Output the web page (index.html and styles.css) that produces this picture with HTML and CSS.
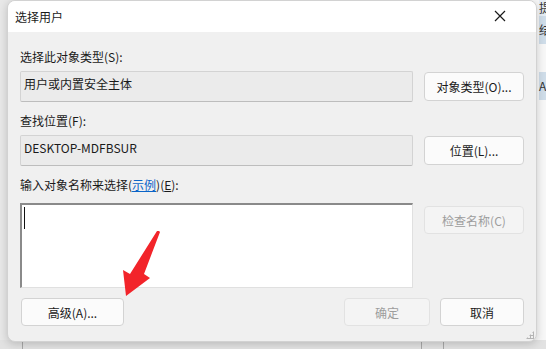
FILE: index.html
```html
<!DOCTYPE html>
<html lang="zh-CN">
<head>
    <meta charset="UTF-8">
    <meta name="viewport" content="width=device-width, initial-scale=1.0">
    <title>选择用户</title>
    <link rel="stylesheet" href="styles.css">
</head>
<body>
    <div class="desktop">
        <div class="backapp">
            <div class="back-head">提</div>
            <div class="back-row blue">结</div>
            <div class="back-row"></div>
            <div class="back-row blue">A</div>
        </div>
        <div class="back-bottom">
            <span class="vline l1"></span>
            <span class="vline l2"></span>
            <span class="vline l3"></span>
        </div>

        <div class="dialog">
            <div class="titlebar">
                <span class="title">选择用户</span>
                <svg class="close" width="12" height="12" viewBox="0 0 12 12">
                    <path d="M1 1 L11 11 M11 1 L1 11" stroke="#1a1a1a" stroke-width="1.2" fill="none"/>
                </svg>
            </div>

            <div class="body">
                <div class="label">选择此对象类型(S):</div>
                <div class="row">
                    <div class="field">用户或内置安全主体</div>
                    <button class="btn">对象类型(O)...</button>
                </div>

                <div class="label">查找位置(F):</div>
                <div class="row">
                    <div class="field">DESKTOP-MDFBSUR</div>
                    <button class="btn">位置(L)...</button>
                </div>

                <div class="label names-label">输入对象名称来选择(<a class="link" href="#">示例</a>)(<u>E</u>):</div>
                <div class="row top">
                    <div class="names"><span class="caret"></span></div>
                    <button class="btn disabled">检查名称(C)</button>
                </div>

                <div class="footer">
                    <button class="btn advanced">高级(A)...</button>
                    <div class="spacer"></div>
                    <button class="btn disabled ok">确定</button>
                    <button class="btn cancel">取消</button>
                </div>
            </div>
            <div class="grip"></div>
        </div>

        <svg class="arrow" width="60" height="80" viewBox="0 0 60 80">
            <path d="M46 4 L47 5 L31 47 L37 51 L13 69 L10 43 L17 47 L44 4 Z" fill="#f2242a"/>
        </svg>
    </div>
</body>
</html>
```

FILE: styles.css
```css
* {
    box-sizing: border-box;
}

body {
    margin: 0;
    font-family: "Noto Sans CJK SC", "Noto Sans", sans-serif;
    font-size: 12px;
    color: #1a1a1a;
    background: #e7e7e7;
}

.desktop {
    position: relative;
    width: 546px;
    height: 349px;
    overflow: hidden;
    background: #e8e8e8;
}

.backapp {
    position: absolute;
    left: 530px;
    top: 0;
    width: 16px;
    height: 349px;
    background: #f7f7f7;
    font-size: 12px;
    line-height: 20px;
    padding-left: 9px;
    color: #333;
    overflow: hidden;
}

.back-head {
    height: 16px;
    line-height: 16px;
    background: #e6edf4;
}

.back-row {
    height: 28px;
    line-height: 28px;
}

.back-row.blue {
    background: #cfdde9;
}

.back-bottom {
    position: absolute;
    left: 0;
    top: 340px;
    width: 546px;
    height: 9px;
    background: #e2e2e2;
}

.vline {
    position: absolute;
    top: 0;
    width: 1px;
    height: 9px;
    background: #a8a8a8;
}

.l1 { left: 22px; }
.l2 { left: 421px; }
.l3 { left: 443px; }

.dialog {
    position: absolute;
    left: 7px;
    top: 0;
    width: 530px;
    height: 342px;
    background: #f0f0f0;
    border: 1px solid #d2d2d2;
    border-radius: 8px;
    box-shadow: 0 2px 8px rgba(0, 0, 0, 0.18);
    overflow: hidden;
}

.titlebar {
    height: 31px;
    background: #fff;
    display: flex;
    align-items: center;
    justify-content: space-between;
    padding: 0 30px 0 7px;
}

.title {
    font-size: 12px;
}

.close {
    display: block;
    margin-top: -1px;
}

.body {
    padding: 17px 12px 0 12px;
}

.label {
    height: 16px;
    line-height: 16px;
    margin-bottom: 6px;
}

.names-label {
    margin-bottom: 10px;
}

.link {
    color: #0a64c8;
    text-decoration: underline;
}

.row {
    display: flex;
    align-items: center;
    gap: 11px;
    margin-bottom: 11px;
}

.row.top {
    align-items: flex-start;
    margin-bottom: 10px;
}

.field {
    width: 393px;
    height: 31px;
    padding: 3px 0 0 3px;
    background: #ebebeb;
    border: 1px solid #d3d3d3;
    border-bottom-color: #bdbdbd;
    border-radius: 2px;
}

.btn {
    width: 100px;
    height: 29px;
    font-family: inherit;
    font-size: 12px;
    color: #1a1a1a;
    background: #fbfbfb;
    border: 1px solid #d3d3d3;
    border-radius: 4px;
    padding: 0;
}

.btn.disabled {
    color: #9d9d9d;
    background: #f4f4f4;
    border-color: #e2e2e2;
}

.row.top .btn {
    margin-top: 3px;
    height: 28px;
}

.names {
    width: 393px;
    height: 85px;
    background: #fff;
    border-top: 2px solid #8a8a8a;
    border-left: 2px solid #8a8a8a;
    border-right: 1px solid #e0e0e0;
    border-bottom: 1px solid #e0e0e0;
    padding: 2px 0 0 2px;
}

.caret {
    display: block;
    width: 1px;
    height: 22px;
    background: #111;
}

.footer {
    display: flex;
    align-items: center;
    gap: 10px;
    padding-left: 1px;
}

.spacer {
    flex: 1;
}

.btn.advanced {
    width: 103px;
    height: 28px;
}

.btn.ok {
    width: 86px;
    height: 28px;
}

.btn.cancel {
    width: 84px;
    height: 28px;
}

.grip {
    position: absolute;
    right: 2px;
    bottom: 2px;
    width: 8px;
    height: 8px;
    background:
        radial-gradient(circle, #b4b4b4 1px, transparent 1.2px) 0 0 / 3px 3px;
    clip-path: polygon(100% 0, 100% 100%, 0 100%);
}

.arrow {
    position: absolute;
    left: 113px;
    top: 227px;
}
```
